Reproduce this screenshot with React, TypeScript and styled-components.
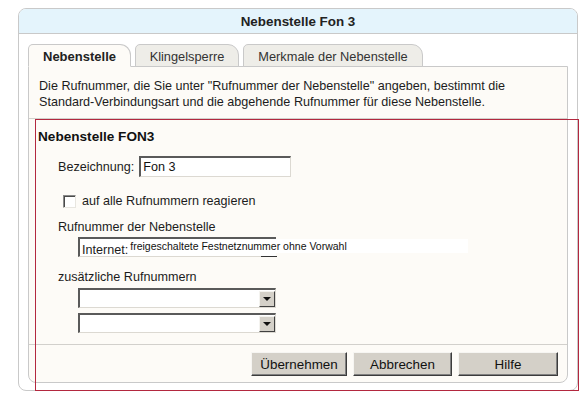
import styled, { createGlobalStyle } from "styled-components";

const GlobalStyle = createGlobalStyle`
  body {
    margin: 0;
    background: #fff;
    font-family: "Liberation Sans", Arial, sans-serif;
    font-size: 12.6px;
    color: #1c1c1c;
  }
`;

const Page = styled.div`
  position: relative;
  width: 586px;
  height: 400px;
  box-sizing: border-box;
  padding: 8px 0 0 18px;
`;

const Panel = styled.div`
  width: 560px;
  height: 383px;
  box-sizing: border-box;
  border: 1px solid #c9c9c9;
  border-radius: 8px;
  background: #fff;
  overflow: hidden;
  display: flex;
  flex-direction: column;
`;

const Header = styled.div`
  height: 25px;
  box-sizing: border-box;
  border-bottom: 1px solid #c9c9c9;
  background: #e4f4fc;
  display: flex;
  align-items: center;
  justify-content: center;
  font-weight: bold;
  font-size: 13.4px;
  color: #222;
`;

const PanelBody = styled.div`
  padding: 10px 9px 0;
`;

const Tabs = styled.div`
  display: flex;
  gap: 4px;
  margin-bottom: -1px;
  position: relative;
  z-index: 1;
`;

const Tab = styled.div<{ $active?: boolean; $width: number }>`
  width: ${(p) => p.$width}px;
  height: 23px;
  box-sizing: border-box;
  border: 1px solid #c9c9c9;
  border-bottom: ${(p) => (p.$active ? "1px solid #fdfbf7" : "1px solid #c9c9c9")};
  border-radius: 5px 11px 0 0;
  background: ${(p) => (p.$active ? "#fdfbf7" : "#eeede8")};
  font-weight: ${(p) => (p.$active ? "bold" : "normal")};
  font-size: ${(p) => (p.$active ? "13px" : "12.8px")};
  color: ${(p) => (p.$active ? "#222" : "#333")};
  display: flex;
  align-items: center;
  justify-content: center;
  padding-top: 1px;
`;

const Content = styled.div`
  width: 540px;
  box-sizing: border-box;
  border: 1px solid #c9c9c9;
  border-radius: 0 0 8px 8px;
  background: #fdfbf7;
`;

const Description = styled.p`
  margin: 0;
  padding: 11px 10px 8px;
  line-height: 16px;
`;

const FormSection = styled.div`
  border-top: 1px solid #d2d0cc;
  padding: 10px 9px 0;
`;

const SectionTitle = styled.div`
  font-weight: bold;
  font-size: 13.6px;
  line-height: 16px;
  color: #111;
`;

const Row = styled.div<{ $indent: number; $top: number }>`
  display: flex;
  align-items: center;
  margin-left: ${(p) => p.$indent}px;
  margin-top: ${(p) => p.$top}px;
  line-height: 16px;
`;

const Label = styled.span`
  margin-right: 5px;
`;

const sunken = `
  box-sizing: border-box;
  border-style: solid;
  border-width: 2px 1px 1px 2px;
  border-color: #5a5a5a #dcd9d2 #dcd9d2 #5a5a5a;
  background: #fff;
`;

const TextInput = styled.input`
  ${sunken}
  width: 152px;
  height: 21px;
  padding: 0 2px;
  margin: 0;
  font-family: "Liberation Sans", Arial, sans-serif;
  font-size: 12.6px;
  color: #111;
  outline: none;
`;

const CheckBox = styled.span`
  width: 13px;
  height: 13px;
  box-sizing: border-box;
  border: 1px solid;
  border-color: #8a8a8a #e8e6e0 #e8e6e0 #8a8a8a;
  box-shadow: inset 1px 1px #4a4a4a;
  background: #fff;
  margin-right: 6px;
`;

const SelectBox = styled.div<{ $width: number }>`
  ${sunken}
  position: relative;
  width: ${(p) => p.$width}px;
  height: 20px;
  display: flex;
  align-items: center;
  padding-left: 2px;
`;

const BrokenSelect = styled(SelectBox)`
  align-items: flex-start;
  border-right: none;
  line-height: 16px;

  &::after {
    content: "";
    position: absolute;
    right: -1px;
    bottom: -1px;
    width: 16px;
    border-bottom: 1px solid #333;
  }
`;

const SelectText = styled.span`
  padding-top: 3px;
`;

const Hint = styled.span`
  position: relative;
  z-index: 1;
  width: 338px;
  flex-shrink: 0;
  margin-left: 2px;
  background: #fff;
  font-size: 10.5px;
  line-height: 14px;
  white-space: nowrap;
  color: #111;
`;

const DropButton = styled.span`
  margin-left: auto;
  width: 16px;
  height: 16px;
  box-sizing: border-box;
  border: 1px solid;
  border-color: #f4f3ef #404040 #404040 #f4f3ef;
  background: #d4d0c8;
  display: flex;
  align-items: center;
  justify-content: center;
`;

const Arrow = styled.span`
  width: 0;
  height: 0;
  border-left: 4px solid transparent;
  border-right: 4px solid transparent;
  border-top: 4px solid #111;
`;

const Footer = styled.div`
  margin-top: 11px;
  border-top: 1px solid #d2d0cc;
  padding: 7px 9px 6px;
  display: flex;
  justify-content: flex-end;
  gap: 6px;
`;

const Button = styled.button<{ $width: number }>`
  width: ${(p) => p.$width}px;
  height: 24px;
  box-sizing: border-box;
  margin: 0;
  padding: 0;
  border: 1px solid;
  border-color: #f6f5f2 #3c3c3c #3c3c3c #f6f5f2;
  box-shadow: inset -1px -1px #808080;
  background: #d4d0c8;
  font-family: "Liberation Sans", Arial, sans-serif;
  font-size: 13.4px;
  color: #111;
`;

const Annotation = styled.div`
  position: absolute;
  left: 35px;
  top: 119px;
  width: 544px;
  height: 272px;
  box-sizing: border-box;
  border: 1px solid #b3283f;
  pointer-events: none;
`;

export default function App() {
  return (
    <Page>
      <GlobalStyle />
      <Panel>
        <Header>Nebenstelle Fon 3</Header>
        <PanelBody>
          <Tabs>
            <Tab $active $width={103}>Nebenstelle</Tab>
            <Tab $width={104}>Klingelsperre</Tab>
            <Tab $width={180}>Merkmale der Nebenstelle</Tab>
          </Tabs>
          <Content>
            <Description>
              Die Rufnummer, die Sie unter "Rufnummer der Nebenstelle" angeben, bestimmt die
              <br />
              Standard-Verbindungsart und die abgehende Rufnummer für diese Nebenstelle.
            </Description>
            <FormSection>
              <SectionTitle>Nebenstelle FON3</SectionTitle>
              <Row $indent={20} $top={11}>
                <Label>Bezeichnung:</Label>
                <TextInput readOnly value="Fon 3" />
              </Row>
              <Row $indent={25} $top={16}>
                <CheckBox />
                <span>auf alle Rufnummern reagieren</span>
              </Row>
              <Row $indent={20} $top={10}>
                <span>Rufnummer der Nebenstelle</span>
              </Row>
              <Row $indent={40} $top={2}>
                <BrokenSelect $width={198}>
                  <SelectText>Internet:</SelectText>
                  <Hint>freigeschaltete Festnetznummer ohne Vorwahl</Hint>
                </BrokenSelect>
              </Row>
              <Row $indent={20} $top={12}>
                <span>zusätzliche Rufnummern</span>
              </Row>
              <Row $indent={40} $top={3}>
                <SelectBox $width={198}>
                  <DropButton>
                    <Arrow />
                  </DropButton>
                </SelectBox>
              </Row>
              <Row $indent={40} $top={5}>
                <SelectBox $width={198}>
                  <DropButton>
                    <Arrow />
                  </DropButton>
                </SelectBox>
              </Row>
            </FormSection>
            <Footer>
              <Button $width={96}>Übernehmen</Button>
              <Button $width={99}>Abbrechen</Button>
              <Button $width={100}>Hilfe</Button>
            </Footer>
          </Content>
        </PanelBody>
      </Panel>
      <Annotation />
    </Page>
  );
}
